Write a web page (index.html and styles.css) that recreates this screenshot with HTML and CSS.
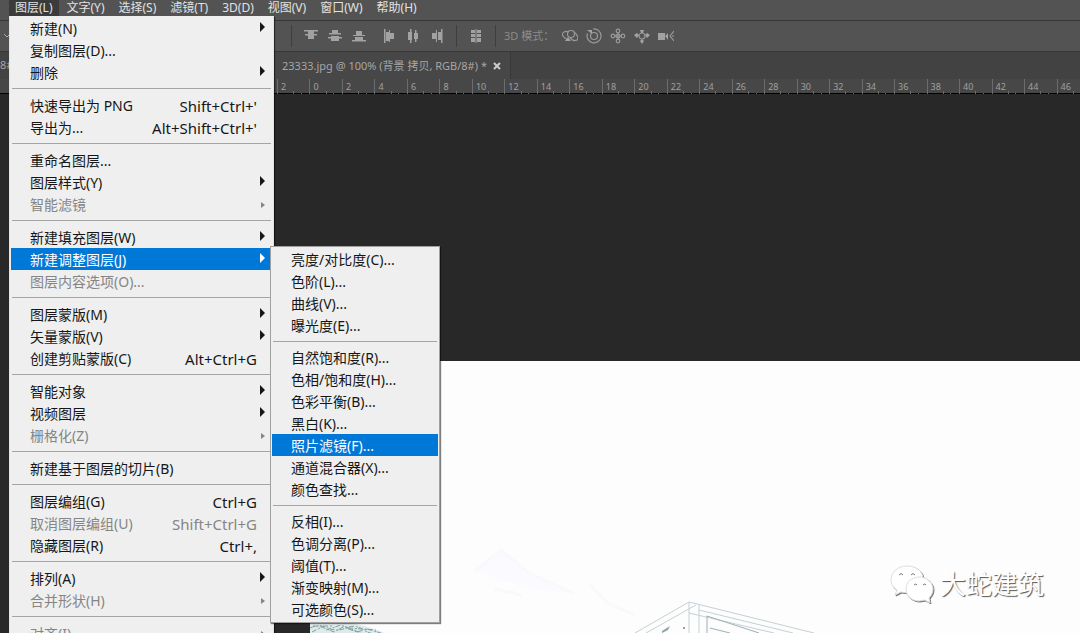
FILE: index.html
```html
<!DOCTYPE html>
<html lang="zh-CN">
<head>
<meta charset="utf-8">
<title>23333.jpg</title>
<link rel="stylesheet" href="styles.css">
</head>
<body>
<div class="app">
  <nav class="menubar">
    <button class="menubar-item is-open">图层(L)</button>
    <button class="menubar-item">文字(Y)</button>
    <button class="menubar-item">选择(S)</button>
    <button class="menubar-item">滤镜(T)</button>
    <button class="menubar-item">3D(D)</button>
    <button class="menubar-item">视图(V)</button>
    <button class="menubar-item">窗口(W)</button>
    <button class="menubar-item">帮助(H)</button>
  </nav>

  <div class="options">
    <svg class="chevron" viewBox="0 0 8 8"><path d="M1 2l3 3 3-3"/></svg>
    <div class="tools tools-vertical">
      <button class="tool" aria-label="顶对齐"><svg viewBox="0 0 16 16"><path d="M1 2h14v1.500H1zM5 3h6v3h3v1.500H2V6h3zM5 7h6v4H5z"/></svg></button>
      <button class="tool" aria-label="垂直居中对齐"><svg viewBox="0 0 16 16"><path d="M5 2h6v3H5zM2 5h12v1.500H2zM1 9h14v1.500H1zM4 8h8v5H4z"/></svg></button>
      <button class="tool" aria-label="底对齐"><svg viewBox="0 0 16 16"><path d="M5 3h6v4H5zM2 7h12v1H2zM4 9h8v3H4zM1 12h14v1.500H1z"/></svg></button>
    </div>
    <div class="tools tools-horizontal">
      <button class="tool" aria-label="左对齐"><svg viewBox="0 0 16 16"><path d="M3 1h1.500v14H3zM5 4h3v9H5zM8 2h1v12H8zM9 5h4v6H9z"/></svg></button>
      <button class="tool" aria-label="水平居中对齐"><svg viewBox="0 0 16 16"><path d="M3 4h4v8H3zM5 1h1.500v14H5zM9 5h4v6H9zM10 2h1.500v12H10z"/></svg></button>
      <button class="tool" aria-label="右对齐"><svg viewBox="0 0 16 16"><path d="M3 5h4v6H3zM7 2h1v12H7zM9 4h3v8H9zM12 1h1.500v14H12z"/></svg></button>
    </div>
    <div class="tools tools-distribute">
      <button class="tool" aria-label="自动对齐"><svg viewBox="0 0 16 16"><path d="M3 2h4v3H3zM3 6h4v3H3zM3 10h4v4H3zM9 2h4v3H9zM9 6h4v3H9zM9 10h4v4H9zM7.500 1h1v14h-1z"/></svg></button>
    </div>
    <div class="tools tools-3d">
      <span class="mode-label">3D 模式：</span>
      <button class="tool" aria-label="旋转 3D 对象"><svg class="line" viewBox="0 0 16 16"><circle cx="9" cy="6" r="3.500"/><path d="M7 4C3 2-1 5 1 8c1 2 3 3 5 4M12 4c3 2 5 6 3 8-2 1-5 0-7-2"/><path class="solid" d="M3 13l3-4 3 4z"/></svg></button>
      <button class="tool" aria-label="滚动 3D 对象"><svg class="line" viewBox="0 0 16 16"><path d="M7 1a7 7 0 1 1-5.500 4.500"/><circle cx="8" cy="8" r="3.500"/><path class="solid" d="M1 2h5v4z"/></svg></button>
      <button class="tool" aria-label="拖动 3D 对象"><svg class="line" viewBox="0 0 16 16"><circle cx="8" cy="3" r="1.800"/><circle cx="8" cy="13" r="1.800"/><circle cx="3" cy="8" r="1.800"/><circle cx="13" cy="8" r="1.800"/><circle cx="8" cy="8" r="2"/><path d="M8 5v6M5 8h6"/></svg></button>
      <button class="tool" aria-label="滑动 3D 对象"><svg class="line" viewBox="0 0 16 16"><circle cx="8" cy="8" r="3"/><path class="solid" d="M6 2h4l-1 3H7zM0 7l3-2 2 2-2 3zM16 7l-3-2-2 2 2 3zM6 13l2-2 2 2-2 3z"/></svg></button>
      <button class="tool" aria-label="缩放 3D 相机"><svg class="line" viewBox="0 0 16 16"><path class="solid" d="M0 5h7v7H0zM7 8l3-3v7z"/><path d="M16 3l-4 5 4 5M14 8h2"/></svg></button>
    </div>
  </div>

  <div class="tabs">
    <span class="tab-rest">8#</span>
    <div class="tab">
      <span>23333.jpg @ 100% (背景 拷贝, RGB/8#) *</span>
      <button class="tab-close" aria-label="关闭"><svg viewBox="0 0 8 8"><path d="M1 1l6 6M7 1L1 7"/></svg></button>
    </div>
  </div>

  <div class="ruler">
    <span>2</span><span>0</span><span>2</span><span>4</span><span>6</span><span>8</span><span>10</span><span>12</span><span>14</span><span>16</span><span>18</span><span>20</span><span>22</span><span>24</span><span>26</span><span>28</span><span>30</span><span>32</span><span>34</span><span>36</span><span>38</span><span>40</span><span>42</span><span>44</span><span>46</span>
  </div>

  <main class="workspace">
    <div class="artboard">
      <svg class="sketch" viewBox="0 0 770 98" aria-hidden="true">
        <path d="M165 36l26-21 28 23 44 20-40-4-30-8z" fill="#fafaff"/>
        <g fill="none" stroke="#f8f9fd" stroke-width="3">
          <path d="M165 36l26-21 28 23 44 20M184 54l28 6M280 50l18 18 26 12"/>
        </g>
        <g fill="none" stroke="#c3d1d4">
          <path d="M325 98L379 67l125 31M336 98l50-28M379 67v31M389 70v28M379 78l85 20M389 75l94 23"/>
          <path d="M397 81v17M397 81l52 17M400 93l20 5" stroke="#9bb0b5"/>
        </g>
        <g fill="#8ba5aa"><path d="M352 96l8-5-2 4-6 3zM373 92h2v2h-2z"/></g>
        <path d="M0 88h42l16 4 17 6H0z" fill="#dfeaea"/>
        <g fill="none" stroke="#82a09e" stroke-width="1" stroke-dasharray="5 2 2 1">
          <path d="M0 93q9-4 18 0t18 0 18 2 22 4M2 97l10-5 12 5 9-5 14 5 10-3 14 4M16 95l15-5 20 8M38 93l28 2M3 91h20"/>
        </g>
      </svg>
      <div class="watermark">
        <svg viewBox="0 0 44 38" aria-hidden="true">
          <path class="bubble" d="M17 1C8 1 1 7 1 15c0 5 3 8 6 10l-2 5 6-3 7 1c8 0 15-6 15-14S26 1 17 1z"/>
          <path class="bubble" d="M29 12c-7 0-13 5-13 12s6 12 13 12l6-1 5 3-1-5c2-2 4-5 4-9 0-7-7-12-14-12z"/>
          <path class="eyes" d="M9 10q2-3 4 0M21 10q2-3 4 0M24 20q2-2 3 0M33 20q2-2 3 0"/>
        </svg>
        <span>大蛇建筑</span>
      </div>
    </div>
  </main>

  <div class="menu menu-layer" role="menu">
    <button class="entry has-sub">新建(N)</button>
    <button class="entry">复制图层(D)...</button>
    <button class="entry has-sub">删除</button>
    <hr>
    <button class="entry">快速导出为 PNG<kbd>Shift+Ctrl+'</kbd></button>
    <button class="entry">导出为...<kbd>Alt+Shift+Ctrl+'</kbd></button>
    <hr>
    <button class="entry">重命名图层...</button>
    <button class="entry has-sub">图层样式(Y)</button>
    <button class="entry has-sub" disabled>智能滤镜</button>
    <hr>
    <button class="entry has-sub">新建填充图层(W)</button>
    <button class="entry has-sub is-active">新建调整图层(J)</button>
    <button class="entry" disabled>图层内容选项(O)...</button>
    <hr>
    <button class="entry has-sub">图层蒙版(M)</button>
    <button class="entry has-sub">矢量蒙版(V)</button>
    <button class="entry">创建剪贴蒙版(C)<kbd>Alt+Ctrl+G</kbd></button>
    <hr>
    <button class="entry has-sub">智能对象</button>
    <button class="entry has-sub">视频图层</button>
    <button class="entry has-sub" disabled>栅格化(Z)</button>
    <hr>
    <button class="entry">新建基于图层的切片(B)</button>
    <hr>
    <button class="entry">图层编组(G)<kbd>Ctrl+G</kbd></button>
    <button class="entry" disabled>取消图层编组(U)<kbd>Shift+Ctrl+G</kbd></button>
    <button class="entry">隐藏图层(R)<kbd>Ctrl+,</kbd></button>
    <hr>
    <button class="entry has-sub">排列(A)</button>
    <button class="entry has-sub" disabled>合并形状(H)</button>
    <hr>
    <button class="entry has-sub" disabled>对齐(I)</button>
  </div>

  <div class="menu menu-adjust" role="menu">
    <button class="entry">亮度/对比度(C)...</button>
    <button class="entry">色阶(L)...</button>
    <button class="entry">曲线(V)...</button>
    <button class="entry">曝光度(E)...</button>
    <hr>
    <button class="entry">自然饱和度(R)...</button>
    <button class="entry">色相/饱和度(H)...</button>
    <button class="entry">色彩平衡(B)...</button>
    <button class="entry">黑白(K)...</button>
    <button class="entry is-active">照片滤镜(F)...</button>
    <button class="entry">通道混合器(X)...</button>
    <button class="entry">颜色查找...</button>
    <hr>
    <button class="entry">反相(I)...</button>
    <button class="entry">色调分离(P)...</button>
    <button class="entry">阈值(T)...</button>
    <button class="entry">渐变映射(M)...</button>
    <button class="entry">可选颜色(S)...</button>
  </div>
</div>
</body>
</html>
```
FILE: styles.css
```css
* { box-sizing: border-box; }

body {
  margin: 0;
  background: #282828;
  font-family: "Noto Sans", "Noto Sans CJK SC", sans-serif;
}

button {
  margin: 0;
  padding: 0;
  border: 0;
  background: none;
  color: inherit;
  font: inherit;
  text-align: left;
}

.app {
  position: relative;
  display: flex;
  flex-direction: column;
  height: 100vh;
  overflow: hidden;
}

.menubar {
  display: flex;
  flex: none;
  gap: 2px;
  height: 20px;
  padding-left: 9px;
  background: #535353;
  color: #e2e2e2;
  font-size: 12px;
  line-height: 15px;
}
.menubar-item { padding: 0 6px 5px; white-space: nowrap; }
.menubar-item.is-open { background: #3b3b3b; }

.options {
  display: flex;
  flex: none;
  align-items: center;
  height: 32px;
  border-top: 1px solid #383838;
  border-bottom: 1px solid #383838;
  background: #535353;
  color: #8b8b8b;
}
.chevron { width: 8px; height: 8px; margin-left: 3px; fill: none; stroke: #aaa; }
.tools { display: flex; align-items: center; gap: 8px; height: 22px; }
.tools-vertical { margin-left: 280px; padding-left: 11px; border-left: 1px solid #3e3e3e; }
.tools-horizontal { margin-left: 14px; }
.tools-distribute { margin-left: 11px; padding: 0 11px; border: solid #3e3e3e; border-width: 0 1px; }
.tools-3d { margin-left: 8px; }
.mode-label { width: 50px; font-size: 11px; line-height: 16px; white-space: nowrap; }
.tool { width: 16px; height: 16px; }
.tool svg { display: block; width: 16px; height: 16px; fill: #a2a2a2; }
.tool svg.line { fill: none; stroke: #999; stroke-width: 1.2; }
.tool .solid { fill: #a2a2a2; stroke: none; }

.tabs {
  display: flex;
  flex: none;
  height: 27px;
  background: #424242;
  color: #a6a6a6;
  font-size: 11px;
  line-height: 26px;
}
.tab-rest { width: 274px; overflow: hidden; }
.tab {
  display: flex;
  align-items: center;
  gap: 6px;
  padding: 0 9px 0 8px;
  border-right: 1px solid #383838;
  background: #474747;
  white-space: nowrap;
}
.tab-close svg { display: block; width: 8px; height: 8px; fill: none; stroke: #ccc; stroke-width: 2; }

.ruler {
  display: grid;
  flex: none;
  grid-template-columns: repeat(25, 1fr);
  height: 15px;
  margin-right: -9px;
  padding-left: 277px;
  border-bottom: 1px solid #000;
  background: #474747;
  color: #a0a0a0;
  font-size: 9px;
  line-height: 16px;
}
.ruler span {
  padding-left: 3px;
  border-left: 1px solid #6c6c6c;
  background:
    linear-gradient(#6c6c6c, #6c6c6c) 50% 100% / 1px 4px no-repeat,
    linear-gradient(#6c6c6c, #6c6c6c) 75% 100% / 1px 2px no-repeat;
}

.workspace {
  display: flex;
  flex: 1;
  padding: 267px 0 0 310px;
  background: #282828;
}
.artboard {
  display: flex;
  flex: 1;
  flex-direction: column;
  justify-content: flex-end;
  position: relative;
  background: #fdfdfd;
}
.sketch { display: block; width: 100%; }
.watermark {
  position: absolute;
  right: 36px;
  bottom: 29px;
  display: flex;
  align-items: center;
  gap: 6px;
  color: #fff;
  font-size: 26px;
  line-height: 40px;
  text-shadow: 1px 1px 1px #555;
}
.watermark svg { width: 44px; height: 38px; filter: drop-shadow(1px 1px 0 #777); }
.bubble { fill: #fff; stroke: #ddd; stroke-width: 1; }
.eyes { fill: none; stroke: #777; stroke-width: 1; }

.menu {
  position: absolute;
  display: flex;
  flex-direction: column;
  padding: 1px;
  border: 1px solid #a0a0a0;
  background: #efefef;
  box-shadow: 1px 1px 1px rgba(0, 0, 0, .5);
  color: #161616;
  font-size: 14px;
  line-height: 20px;
}
.menu-layer { top: 16px; left: 9px; width: 265px; border-top: 0; border-color: #e4e4e4; }
.menu-adjust { top: 246px; left: 270px; width: 170px; padding-bottom: 2px; }
.menu hr {
  flex: none;
  width: auto;
  height: 1px;
  margin: 5px 1px;
  border: 0;
  background: #a5a5a5;
}
.menu-adjust hr { margin: 5px 1px 4px; }
.entry {
  display: flex;
  flex: none;
  justify-content: space-between;
  position: relative;
  height: 22px;
  padding: 2px 15px 0 19px;
  white-space: nowrap;
}
.entry kbd { font-family: inherit; font-size: 15px; }
.entry:disabled { color: #858585; }
.entry.is-active { background: #0078d7; color: #fff; }
.has-sub::after {
  content: "";
  align-self: center;
  margin: 0 -8px 4px 0;
  border: solid transparent;
  border-width: 5px 0 5px 5px;
  border-left-color: currentColor;
}
.has-sub:disabled::after { margin-bottom: 0; border-width: 3px 0 3px 4px; }
```
